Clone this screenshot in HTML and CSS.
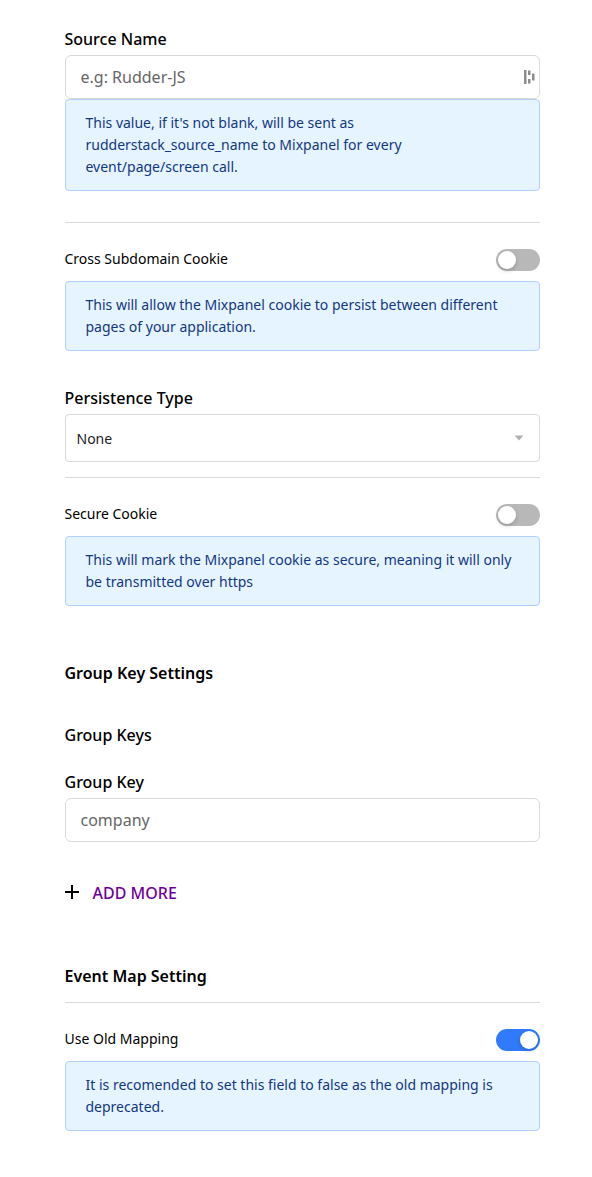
FILE: index.html
```html
<!DOCTYPE html>
<html lang="en">
<head>
<meta charset="utf-8">
<title>Mixpanel settings</title>
<link rel="stylesheet" href="styles.css">
</head>
<body>
<main class="form">
  <section class="field source">
    <div class="label">Source Name</div>
    <div class="input"><span>e.g: Rudder-JS</span>
      <svg class="manager-icon" width="11" height="14" viewBox="0 0 11 14" fill="#8c8c8c"><path d="M0 0h2.500v14H0zM4 .5h2.500v4.500H4zM4 9h2.500v4.500H4zM8 3.500h2.500v7H8z"/></svg>
    </div>
    <div class="note">This value, if it's not blank, will be sent as<br>rudderstack_source_name to Mixpanel for every<br>event/page/screen call.</div>
  </section>
  <section class="toggle-block cross">
    <div class="toggle-row"><span>Cross Subdomain Cookie</span><span class="switch"></span></div>
    <div class="note">This will allow the Mixpanel cookie to persist between different<br>pages of your application.</div>
  </section>
  <section class="field persistence">
    <div class="label">Persistence Type</div>
    <div class="select"><span>None</span><svg width="10" height="6" viewBox="0 0 10 6"><path d="M.7.500h8.600L5 5.500z" fill="#b0b0b0"/></svg></div>
  </section>
  <section class="toggle-block secure">
    <div class="toggle-row"><span>Secure Cookie</span><span class="switch"></span></div>
    <div class="note">This will mark the Mixpanel cookie as secure, meaning it will only<br>be transmitted over https</div>
  </section>
  <h2 class="heading group-title">Group Key Settings</h2>
  <h3 class="label keys-title">Group Keys</h3>
  <section class="field">
    <div class="label">Group Key</div>
    <div class="input"><span>company</span></div>
  </section>
  <div class="add"><svg width="14" height="14" viewBox="0 0 14 14"><path d="M7 0v14M0 7h14" stroke="#000" stroke-width="2"/></svg><span>ADD MORE</span></div>
  <h2 class="heading event-title">Event Map Setting</h2>
  <section class="toggle-block mapping">
    <div class="toggle-row"><span>Use Old Mapping</span><span class="switch on"></span></div>
    <div class="note">It is recomended to set this field to false as the old mapping is<br>deprecated.</div>
  </section>
</main>
</body>
</html>
```
FILE: styles.css
```css
* { box-sizing: border-box; }
body { margin: 0; background: #fff; color: #000; font-family: "Noto Sans", sans-serif; font-size: 14px; line-height: 22px; }
.form { width: 475.500px; margin-left: 64.500px; padding-top: 28px; }
.label, .heading { margin: 0; font-size: 16px; line-height: 22px; font-weight: 500; white-space: nowrap; }
.heading { font-weight: 600; }
.label { padding-bottom: 5px; }
.input { height: 44px; border: 1px solid #d9d9d9; border-radius: 6px; padding: 0 4px 0 15px; display: flex; align-items: center; justify-content: space-between; font-size: 16px; color: #666; }
.note { border: 1px solid #b0d0ff; border-radius: 4px; background: #e6f4ff; color: #12387f; padding: 12px 20px; white-space: nowrap; }
.toggle-block { border-top: 1px solid #d9d9d9; padding-top: 25px; }
.toggle-row { height: 33px; display: flex; justify-content: space-between; align-items: flex-start; }
.switch { width: 44px; height: 22px; margin-top: 1px; padding: 2px; border-radius: 11px; background: #b8b8b8; display: flex; }
.switch::before { content: ""; width: 18px; height: 18px; border-radius: 50%; background: #fff; box-shadow: 0 2px 4px rgba(0,35,11,.2); }
.switch.on { background: #307afc; justify-content: flex-end; }
.cross { margin-top: 31px; }
.persistence { margin-top: 36px; }
.select { height: 48px; border: 1px solid #d9d9d9; border-radius: 4px; padding: 0 15px 0 11px; display: flex; align-items: center; justify-content: space-between; color: #222; }
.select span { padding-top: 2px; }
.secure { margin-top: 15px; }
.group-title { margin-top: 56px; }
.keys-title { margin-top: 40px; margin-bottom: 20px; }
.add { margin-top: 40px; height: 22px; display: flex; align-items: center; gap: 14px; color: #6f0099; font-size: 16px; font-weight: 500; }
.add svg { margin-bottom: 2px; }
.event-title { margin-top: 61px; }
.mapping { margin-top: 15px; }
```
